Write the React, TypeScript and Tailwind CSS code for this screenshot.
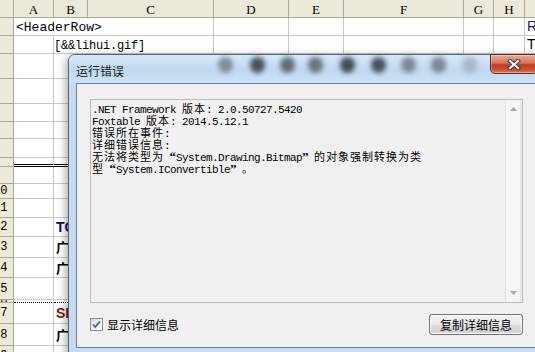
import React from "react";

type CellDef = { w: string; text?: React.ReactNode; cls?: string };
type RowDef = { n: number; h: string; cells: CellDef[]; bottom?: string };

const colW = ["w-[40px]", "w-[34px]", "w-[126px]", "w-[75px]", "w-[55px]", "w-[120px]", "w-[30px]", "w-[31px]", "w-[40px]"];
const letters = ["A", "B", "C", "D", "E", "F", "G", "H", "I"];
const std: CellDef[] = colW.map((w) => ({ w }));

const bold = "pl-[2px] font-['Liberation_Sans',sans-serif] text-[14px] font-bold";
const han = "pl-[2px] font-['Noto_Sans_CJK_SC',sans-serif] text-[13px] font-bold";

function withB(text: string, cls: string): CellDef[] {
  return std.map((c, i) => (i === 1 ? { ...c, text, cls } : c));
}

const rows: RowDef[] = [
  {
    n: 1,
    h: "h-[18px]",
    cells: [
      { w: "w-[200px]", text: "<HeaderRow>", cls: "pl-[2px] pt-[2px] font-['Liberation_Mono',monospace] text-[13px]" },
      ...std.slice(3, 8),
      { w: "w-[40px]", text: "R", cls: "pl-[2px] font-['Liberation_Sans',sans-serif] text-[14px] text-[#1a1a5e]" },
    ],
  },
  {
    n: 2,
    h: "h-[18px]",
    cells: [
      std[0],
      { w: "w-[160px]", text: "[&&lihui.gif]", cls: "pt-[2px] font-['Liberation_Mono',monospace] text-[12px] tracking-[-0.2px]" },
      ...std.slice(3, 8),
      { w: "w-[40px]", text: "T", cls: "pl-[2px] font-['Liberation_Sans',sans-serif] text-[14px]" },
    ],
  },
  { n: 3, h: "h-[25px]", cells: std },
  { n: 4, h: "h-[25px]", cells: std },
  { n: 5, h: "h-[18px]", cells: std },
  { n: 6, h: "h-[17px]", cells: std },
  { n: 7, h: "h-[19px]", cells: std },
  { n: 8, h: "h-[9px]", cells: std, bottom: "border-b-[3px] border-double border-b-black" },
  { n: 9, h: "h-[17px]", cells: std },
  { n: 10, h: "h-[15px]", cells: std },
  { n: 11, h: "h-[19px]", cells: std },
  { n: 12, h: "h-[19px]", cells: withB("TC", `${bold} text-[#12124a]`) },
  { n: 13, h: "h-[21px]", cells: withB("广", han) },
  { n: 14, h: "h-[20px]", cells: withB("广", han) },
  { n: 15, h: "h-[22px]", cells: std },
  { n: 16, h: "h-[3px]", cells: std, bottom: "border-b border-dotted border-b-black" },
  { n: 17, h: "h-[21px]", cells: withB("SH", `${bold} text-[#7a1a12]`) },
  { n: 18, h: "h-[22px]", cells: withB("广", han) },
  { n: 19, h: "h-[20px]", cells: std },
];

function Sheet() {
  return (
    <div className="flex flex-col">
      <div className="flex h-[18px] bg-[#ece9d8]">
        <div className="w-[14px] shrink-0 border-r border-b border-[#aca899]" />
        {letters.map((l, i) => (
          <div
            key={l}
            className={`${colW[i]} shrink-0 border-r border-b border-[#aca899] flex items-center justify-center pt-[2px] font-['Liberation_Serif',serif] text-[13px]`}
          >
            {l}
          </div>
        ))}
      </div>
      {rows.map((r) => (
        <div key={r.n} className={`flex ${r.h}`}>
          <div className="w-[14px] shrink-0 overflow-hidden border-r border-b border-[#aca899] bg-[#ece9d8] flex items-center">
            <span className="-ml-[7px] font-['Liberation_Mono',monospace] text-[12px] leading-none">{r.n}</span>
          </div>
          {r.cells.map((c, i) => (
            <div
              key={i}
              className={`${c.w} shrink-0 flex items-center whitespace-nowrap border-r border-[#c8c8c8] ${r.bottom ?? "border-b border-b-[#c8c8c8]"} ${c.cls ?? ""}`}
            >
              {c.text}
            </div>
          ))}
        </div>
      ))}
    </div>
  );
}

// splits a line into CJK / latin / quote runs so each gets SimSun-like widths
function Rich({ text }: { text: string }) {
  const parts: { t: string; k: string }[] = [];
  for (const ch of text) {
    const k = ch === "“" ? "o" : ch === "”" ? "x" : /[\u3000-\u9fff\uff00-\uffef]/.test(ch) ? "c" : "l";
    const last = parts[parts.length - 1];
    if (last && last.k === k && (k === "c" || k === "l")) last.t += ch;
    else parts.push({ t: ch, k });
  }
  return (
    <>
      {parts.map((p, i) => {
        if (p.k === "c")
          return (
            <span key={i} className="font-['Noto_Sans_CJK_SC',sans-serif] text-[11px] tracking-[1px]">
              {p.t}
            </span>
          );
        if (p.k === "l")
          return (
            <span key={i} className="whitespace-pre font-['Liberation_Mono',monospace] text-[11px] tracking-[-0.6px]">
              {p.t}
            </span>
          );
        return (
          <span
            key={i}
            className={`inline-block w-[12px] font-['Liberation_Serif',serif] text-[13px] font-bold ${p.k === "o" ? "text-right" : "text-left"}`}
          >
            {p.t}
          </span>
        );
      })}
    </>
  );
}

const lines = [
  ".NET Framework 版本: 2.0.50727.5420",
  "Foxtable 版本: 2014.5.12.1",
  "错误所在事件:",
  "详细错误信息:",
  "无法将类型为“System.Drawing.Bitmap”的对象强制转换为类",
  "型“System.IConvertible”。",
];

const blobs = [
  { l: "left-[149px]", c: "bg-[#7f8d9b]" },
  { l: "left-[181px]", c: "bg-[#46515d]" },
  { l: "left-[211px]", c: "bg-[#5f6b78]" },
  { l: "left-[239px]", c: "bg-[#68747f]" },
  { l: "left-[271px]", c: "bg-[#414b56]" },
  { l: "left-[302px]", c: "bg-[#47515c]" },
  { l: "left-[332px]", c: "bg-[#7d8995]" },
  { l: "left-[362px]", c: "bg-[#7b8793]" },
  { l: "left-[393px]", c: "bg-[#a8b6c5]" },
];

function Dialog() {
  return (
    <div className="absolute left-[68px] top-[54px] h-[310px] w-[490px] rounded-t-[7px] border border-[#53657a] bg-[#c6dbf1] shadow-[-2px_2px_8px_rgba(0,0,0,0.35)]">
      <div className="relative flex h-[28px] items-center rounded-t-[6px] bg-[linear-gradient(180deg,#d6e7f9_0%,#c0d8f1_55%,#cde2f7_100%)] pl-[7px] pt-[3px]">
        <span className="font-['Noto_Sans_CJK_SC',sans-serif] text-[12px] leading-none text-[#1b1b1b]">运行错误</span>
        {blobs.map((b) => (
          <div key={b.l} className={`absolute top-[2px] h-[16px] w-[15px] rounded-full blur-[2.5px] ${b.l} ${b.c}`} />
        ))}
        <div className="absolute left-[421px] top-[-1px] flex h-[20px] w-[48px] items-center justify-center rounded-b-[5px] border border-[#5b2a20] bg-[linear-gradient(180deg,#eaa99a_0%,#d9735c_45%,#c3391f_55%,#cf5539_85%,#dd8166_100%)] shadow-[inset_0_0_0_1px_rgba(255,255,255,0.3)]">
          <svg width="14" height="11" viewBox="0 0 14 11">
            <path d="M3 2 L11 9 M11 2 L3 9" stroke="#3b3b3b" strokeWidth="4.2" strokeLinecap="square" />
            <path d="M3 2 L11 9 M11 2 L3 9" stroke="#ffffff" strokeWidth="2.2" strokeLinecap="square" />
          </svg>
        </div>
      </div>
      <div className="ml-[7px] h-[265px] border border-[#6f8092] bg-[#f0f0f0] pl-[13px] pt-[15px]">
        <div className="w-[433px]">
          <div className="flex h-[204px] border border-[#bcbcbc] bg-[#f0f0f0] pr-[1px]">
            <div className="flex-1 pl-[1px] pt-[2px] text-black">
              {lines.map((l) => (
                <div key={l} className="h-[12px] whitespace-nowrap leading-[12px]">
                  <Rich text={l} />
                </div>
              ))}
            </div>
            <div className="flex w-[16px] flex-col items-center justify-between border-x border-[#e3e3e3] bg-[#f5f5f5] py-[7px]">
              <svg width="7" height="4" viewBox="0 0 7 4">
                <path d="M0 4 L3.5 0 L7 4 Z" fill="#a6a6a6" />
              </svg>
              <svg width="7" height="4" viewBox="0 0 7 4">
                <path d="M0 0 L7 0 L3.5 4 Z" fill="#a6a6a6" />
              </svg>
            </div>
          </div>
          <div className="mt-[11px] flex h-[21px] items-center justify-between">
            <label className="flex items-center gap-[4px]">
              <span className="flex h-[13px] w-[13px] items-center justify-center border border-[#8e8f8f] bg-[linear-gradient(135deg,#d8d8d8,#ffffff)]">
                <svg width="11" height="11" viewBox="0 0 11 11">
                  <path d="M2 5.5 L4.3 8 L9 2.5" fill="none" stroke="#4a5c94" strokeWidth="1.8" />
                </svg>
              </span>
              <span className="font-['Noto_Sans_CJK_SC',sans-serif] text-[12px] leading-none">显示详细信息</span>
            </label>
            <button className="flex h-[21px] w-[94px] items-center justify-center rounded-[3px] border border-[#707070] bg-[linear-gradient(180deg,#f2f2f2_0%,#ebebeb_50%,#dddddd_51%,#cfcfcf_100%)] font-['Noto_Sans_CJK_SC',sans-serif] text-[12px] leading-none text-black shadow-[inset_0_0_0_1px_#fcfcfc]">
              复制详细信息
            </button>
          </div>
        </div>
      </div>
    </div>
  );
}

export default function App() {
  return (
    <div className="relative h-[352px] w-[535px] overflow-hidden bg-white font-['Liberation_Sans','Noto_Sans_CJK_SC',sans-serif] text-black">
      <Sheet />
      <Dialog />
    </div>
  );
}
